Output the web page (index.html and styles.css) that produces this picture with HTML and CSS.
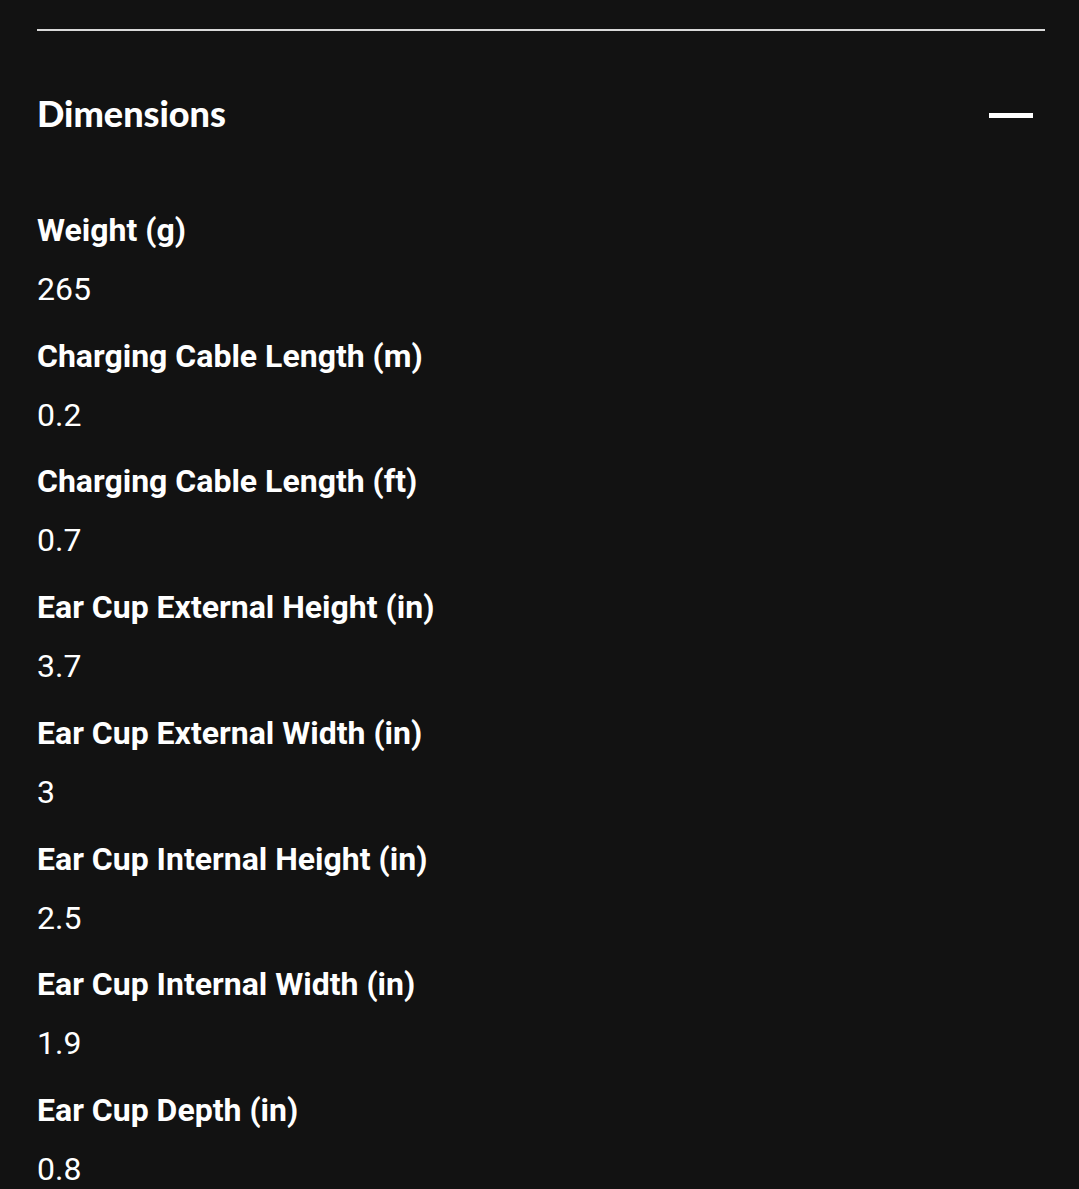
FILE: index.html
```html
<!DOCTYPE html>
<html lang="en">
<head>
<meta charset="utf-8">
<title>Dimensions</title>
<link rel="stylesheet" href="styles.css">
</head>
<body>
<section class="specs">
  <div class="divider"></div>
  <div class="specs-head">
    <h2 class="specs-title">Dimensions</h2>
    <span class="collapse-icon" aria-hidden="true"></span>
  </div>
  <dl class="spec-list">
    <div class="spec"><dt class="spec-label">Weight (g)</dt><dd class="spec-value">265</dd></div>
    <div class="spec"><dt class="spec-label">Charging Cable Length (m)</dt><dd class="spec-value">0.2</dd></div>
    <div class="spec"><dt class="spec-label">Charging Cable Length (ft)</dt><dd class="spec-value">0.7</dd></div>
    <div class="spec"><dt class="spec-label">Ear Cup External Height (in)</dt><dd class="spec-value">3.7</dd></div>
    <div class="spec"><dt class="spec-label">Ear Cup External Width (in)</dt><dd class="spec-value">3</dd></div>
    <div class="spec"><dt class="spec-label">Ear Cup Internal Height (in)</dt><dd class="spec-value">2.5</dd></div>
    <div class="spec"><dt class="spec-label">Ear Cup Internal Width (in)</dt><dd class="spec-value">1.9</dd></div>
    <div class="spec"><dt class="spec-label">Ear Cup Depth (in)</dt><dd class="spec-value">0.8</dd></div>
  </dl>
</section>
</body>
</html>
```
FILE: styles.css
```css
html, body {
  margin: 0;
  padding: 0;
  background: #121212;
  color: #ffffff;
  font-family: Roboto, "Liberation Sans", sans-serif;
}
body {
  height: 1189px;
  overflow: hidden;
}
.specs {
  padding: 29px 34px 0 37px;
}
.divider {
  height: 2px;
  background: #d9d9d9;
}
.specs-head {
  display: flex;
  align-items: center;
  justify-content: space-between;
  height: 115.6px;
  margin-top: 24px;
}
.specs-title {
  margin: 0;
  font-family: Lato, "Open Sans", sans-serif;
  font-weight: 900;
  font-size: 36px;
  line-height: 40px;
}
.collapse-icon {
  display: block;
  width: 44px;
  height: 5px;
  background: #ffffff;
  margin-right: 12px;
  margin-top: 6px;
}
.spec-list {
  margin: 0;
  padding-top: 39.5px;
  display: flex;
  flex-direction: column;
  gap: 26.7px;
}
.spec-label {
  margin: 0;
  font-weight: 700;
  font-size: 32px;
  line-height: 40px;
}
.spec-value {
  margin: 19px 0 0 0;
  font-weight: 400;
  font-size: 32px;
  line-height: 40px;
}
```
